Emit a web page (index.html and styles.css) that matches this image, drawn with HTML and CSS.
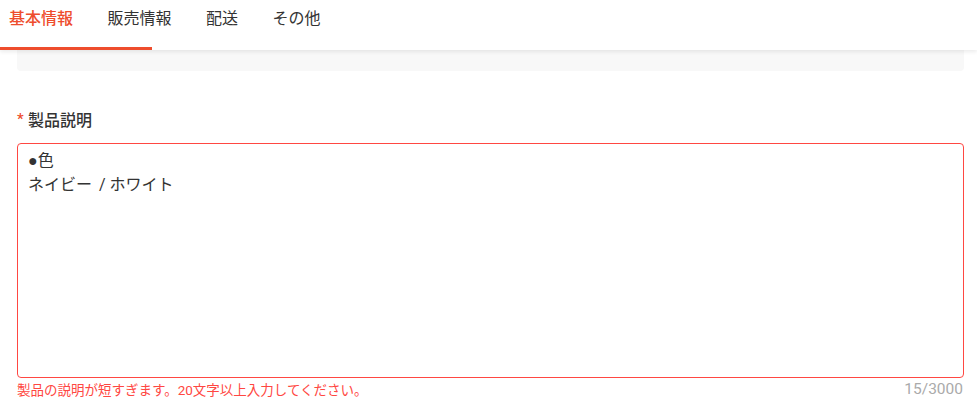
FILE: index.html
```html
<!DOCTYPE html>
<html lang="ja">
<head>
<meta charset="utf-8">
<link rel="stylesheet" href="styles.css">
</head>
<body>
<header class="tabs">
  <nav class="tab-list">
    <span class="tab active">基本情報</span>
    <span class="tab">販売情報</span>
    <span class="tab">配送</span>
    <span class="tab">その他</span>
  </nav>
  <span class="ink-bar"></span>
</header>
<main class="content">
  <div class="grey-panel"></div>
  <section class="field">
    <label class="field-label"><span class="required">*</span>製品説明</label>
    <div class="textarea"><span class="bullet">●</span>色<br>ネイビー<span class="gap"> </span>/ ホワイト</div>
    <div class="field-foot">
      <span class="error">製品の説明が短すぎます。20文字以上入力してください。</span>
      <span class="counter">15/3000</span>
    </div>
  </section>
</main>
</body>
</html>
```

FILE: styles.css
```css
* { box-sizing: border-box; }
html, body { margin: 0; padding: 0; background: #fff; }
body {
  font-family: Roboto, "Noto Sans CJK JP", sans-serif;
  color: #333;
  width: 977px;
  height: 410px;
  overflow: hidden;
}
.tabs {
  position: relative;
  height: 50px;
  background: #fff;
  box-shadow: 0 2px 4px rgba(0,0,0,0.08);
  z-index: 2;
}
.tab-list {
  display: flex;
  gap: 34.5px;
  padding-left: 9px;
  height: 47px;
  align-items: center;
  padding-bottom: 10px;
}
.tab {
  font-size: 16px;
  line-height: 22px;
  color: #333;
}
.tab.active { color: #ee4d2d; font-weight: 500; }
.ink-bar {
  position: absolute;
  left: 0;
  top: 47px;
  width: 152px;
  height: 3px;
  background: #ee4d2d;
}
.content {
  padding: 0 13px 0 17px;
}
.grey-panel {
  height: 21px;
  background: #f8f8f8;
  border-radius: 0 0 4px 4px;
}
.field { margin-top: 38px; }
.field-label {
  display: flex;
  align-items: center;
  height: 20px;
  font-size: 16px;
  font-weight: 500;
  color: #333;
}
.required {
  color: #ee4d2d;
  width: 11px;
  font-size: 15px;
}
.textarea {
  margin-top: 14px;
  height: 235px;
  border: 1px solid #ff4742;
  border-radius: 4px;
  padding: 5px 10px;
  font-size: 16px;
  line-height: 24px;
  color: #333;
}
.bullet {
  font-family: "Liberation Sans", sans-serif;
}
.gap { padding-left: 3px; }
.field-foot {
  display: flex;
  justify-content: space-between;
  align-items: center;
  height: 22px;
}
.error {
  font-size: 13.5px;
  color: #ff4742;
}
.counter {
  font-size: 15.5px;
  color: #aaa;
  padding-right: 1px;
}
```
